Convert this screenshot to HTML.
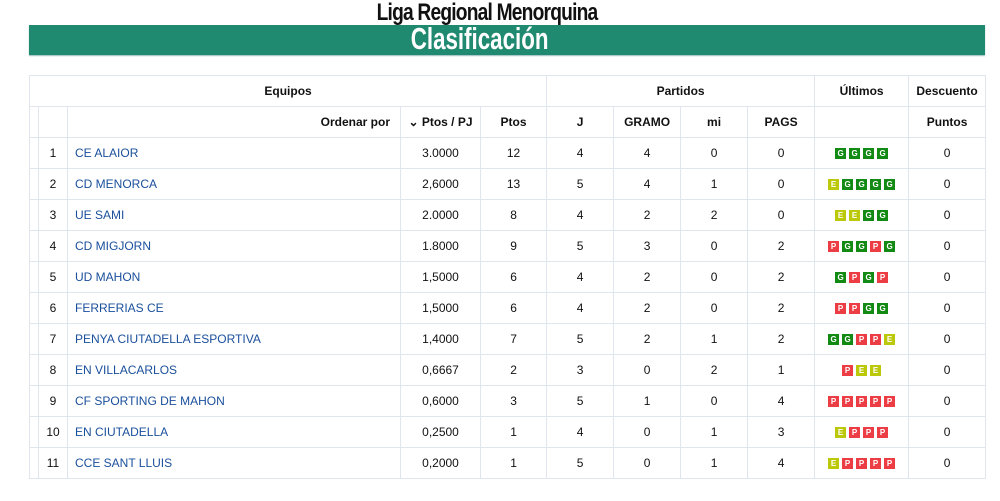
<!DOCTYPE html>
<html><head><meta charset="utf-8"><style>
body{margin:0;background:#fff;width:1000px;height:501px;overflow:hidden;font-family:"Liberation Sans",sans-serif;position:relative}
.t1{position:absolute;left:0;width:975px;top:0;text-align:center;font-weight:bold;font-size:24px;line-height:26px;color:#111;letter-spacing:-1px}
.t1 span{display:inline-block;transform:scaleX(0.8)}
.bar{position:absolute;left:29px;top:25px;width:956px;height:30px;background:#1f8a70;box-shadow:0 1px 1px #9bb}
.bar div{text-align:center;color:#fff;font-weight:bold;font-size:31px;line-height:28px;margin-left:-54px}
.bar span{display:inline-block;transform:scaleX(0.72)}
table{position:absolute;left:29px;top:75px;border-collapse:collapse;table-layout:fixed;width:956px;font-size:12px;color:#111}
td,th{border:1px solid #e0e6ee;height:30px;padding:0;text-align:center}
th{font-weight:bold;font-size:12px}
td.n{text-align:left;padding-left:7px;color:#1a4f9c}
.b{display:inline-block;width:11px;height:11px;font-size:8px;line-height:11px;color:#fff;font-weight:bold;margin:0 1.5px;vertical-align:middle;font-style:normal}
.G{background:#138a13}.E{background:#bcc90a}.P{background:#ec3d44}
</style></head><body>
<div class="t1"><span>Liga Regional Menorquina</span></div>
<div class="bar"><div><span>Clasificación</span></div></div>
<table>
<colgroup><col style="width:9px"><col style="width:29px"><col style="width:333px"><col style="width:80px"><col style="width:66px"><col style="width:67px"><col style="width:67px"><col style="width:67px"><col style="width:67px"><col style="width:94px"><col style="width:77px"></colgroup>
<tr><th colspan="5">Equipos</th><th colspan="4">Partidos</th><th>Últimos</th><th>Descuento</th></tr>
<tr><th></th><th></th><th style="text-align:right;padding-right:10px">Ordenar por</th><th>⌄ Ptos / PJ</th><th>Ptos</th><th>J</th><th>GRAMO</th><th>mi</th><th>PAGS</th><th></th><th>Puntos</th></tr>
<tr><td></td><td>1</td><td class="n">CE ALAIOR</td><td>3.0000</td><td>12</td><td>4</td><td>4</td><td>0</td><td>0</td><td><i class="b G">G</i><i class="b G">G</i><i class="b G">G</i><i class="b G">G</i></td><td>0</td></tr>
<tr><td></td><td>2</td><td class="n">CD MENORCA</td><td>2,6000</td><td>13</td><td>5</td><td>4</td><td>1</td><td>0</td><td><i class="b E">E</i><i class="b G">G</i><i class="b G">G</i><i class="b G">G</i><i class="b G">G</i></td><td>0</td></tr>
<tr><td></td><td>3</td><td class="n">UE SAMI</td><td>2.0000</td><td>8</td><td>4</td><td>2</td><td>2</td><td>0</td><td><i class="b E">E</i><i class="b E">E</i><i class="b G">G</i><i class="b G">G</i></td><td>0</td></tr>
<tr><td></td><td>4</td><td class="n">CD MIGJORN</td><td>1.8000</td><td>9</td><td>5</td><td>3</td><td>0</td><td>2</td><td><i class="b P">P</i><i class="b G">G</i><i class="b G">G</i><i class="b P">P</i><i class="b G">G</i></td><td>0</td></tr>
<tr><td></td><td>5</td><td class="n">UD MAHON</td><td>1,5000</td><td>6</td><td>4</td><td>2</td><td>0</td><td>2</td><td><i class="b G">G</i><i class="b P">P</i><i class="b G">G</i><i class="b P">P</i></td><td>0</td></tr>
<tr><td></td><td>6</td><td class="n">FERRERIAS CE</td><td>1,5000</td><td>6</td><td>4</td><td>2</td><td>0</td><td>2</td><td><i class="b P">P</i><i class="b P">P</i><i class="b G">G</i><i class="b G">G</i></td><td>0</td></tr>
<tr><td></td><td>7</td><td class="n">PENYA CIUTADELLA ESPORTIVA</td><td>1,4000</td><td>7</td><td>5</td><td>2</td><td>1</td><td>2</td><td><i class="b G">G</i><i class="b G">G</i><i class="b P">P</i><i class="b P">P</i><i class="b E">E</i></td><td>0</td></tr>
<tr><td></td><td>8</td><td class="n">EN VILLACARLOS</td><td>0,6667</td><td>2</td><td>3</td><td>0</td><td>2</td><td>1</td><td><i class="b P">P</i><i class="b E">E</i><i class="b E">E</i></td><td>0</td></tr>
<tr><td></td><td>9</td><td class="n">CF SPORTING DE MAHON</td><td>0,6000</td><td>3</td><td>5</td><td>1</td><td>0</td><td>4</td><td><i class="b P">P</i><i class="b P">P</i><i class="b P">P</i><i class="b P">P</i><i class="b P">P</i></td><td>0</td></tr>
<tr><td></td><td>10</td><td class="n">EN CIUTADELLA</td><td>0,2500</td><td>1</td><td>4</td><td>0</td><td>1</td><td>3</td><td><i class="b E">E</i><i class="b P">P</i><i class="b P">P</i><i class="b P">P</i></td><td>0</td></tr>
<tr><td></td><td>11</td><td class="n">CCE SANT LLUIS</td><td>0,2000</td><td>1</td><td>5</td><td>0</td><td>1</td><td>4</td><td><i class="b E">E</i><i class="b P">P</i><i class="b P">P</i><i class="b P">P</i><i class="b P">P</i></td><td>0</td></tr>
</table>
</body></html>
